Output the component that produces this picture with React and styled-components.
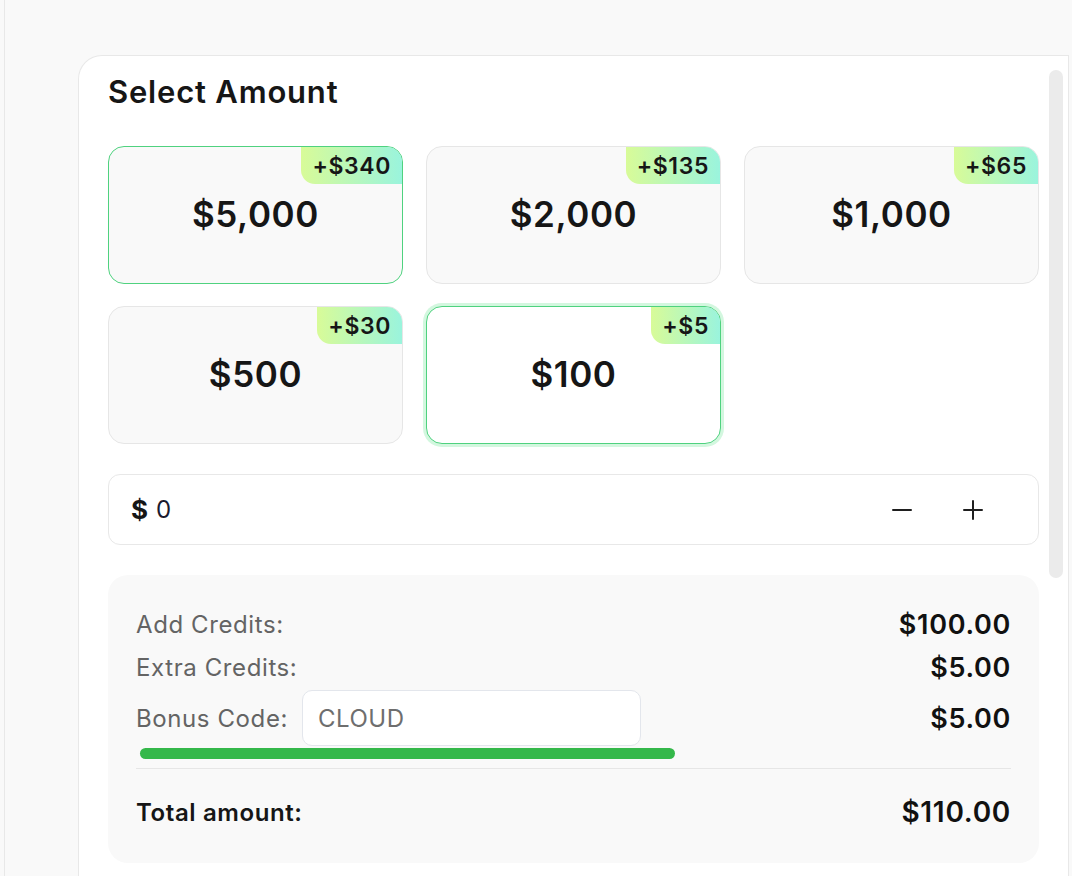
import React from 'react';
import styled, { createGlobalStyle, css } from 'styled-components';

const GlobalStyle = createGlobalStyle`
  html, body {
    margin: 0;
    padding: 0;
    background: #f9f9f9;
    font-family: Inter, "Noto Sans", sans-serif;
    color: #161616;
  }
  * { box-sizing: border-box; }
`;

const Page = styled.div`
  display: flex;
  height: 876px;
  overflow: hidden;
  background: #f9f9f9;
`;

const Rail = styled.div`
  width: 5px;
  flex-shrink: 0;
  border-right: 1px solid #e8e8e8;
`;

const Main = styled.div`
  flex: 1;
  padding: 55px 0 0 73px;
`;

const Card = styled.div`
  position: relative;
  width: 991px;
  height: 100%;
  background: #fff;
  border: 1px solid #e8e8e8;
  border-bottom: none;
  border-radius: 24px 0 0 0;
  padding: 16px 29px 0 29px;
`;

const ScrollThumb = styled.div`
  position: absolute;
  top: 14px;
  right: 5px;
  width: 14px;
  height: 508px;
  border-radius: 7px;
  background: #ebebeb;
`;

const Title = styled.h2`
  margin: 0 0 34px;
  font-size: 31px;
  line-height: 40px;
  font-weight: 600;
  letter-spacing: 0.8px;
  color: #161616;
`;

const Grid = styled.div`
  display: grid;
  grid-template-columns: repeat(3, 295px);
  column-gap: 23px;
  row-gap: 22px;
  width: 931px;
`;

const Tile = styled.div`
  position: relative;
  height: 138px;
  border-radius: 16px;
  border: 1px solid #e6e6e6;
  background: #f9f9f9;
  display: flex;
  align-items: center;
  justify-content: center;
  overflow: hidden;
  ${(p) =>
    p.$selected &&
    css`
      border-color: #4fd27f;
    `}
  ${(p) =>
    p.$active &&
    css`
      border-color: #4fd27f;
      background: #fff;
      box-shadow: 0 0 0 3px #d3f7df;
    `}
`;

const TileAmount = styled.span`
  font-size: 35px;
  font-weight: 600;
  letter-spacing: 0.6px;
  color: #161616;
  margin-top: -2px;
`;

const Badge = styled.span`
  position: absolute;
  top: 0;
  right: 0;
  height: 37px;
  padding: 0 11px 0 11px;
  display: flex;
  align-items: center;
  border-radius: 0 0 0 14px;
  background: linear-gradient(90deg, #d8fb98 0%, #9af4dd 100%);
  font-size: 23px;
  font-weight: 600;
  letter-spacing: 0.6px;
  color: #161616;
`;

const AmountInput = styled.div`
  margin-top: 30px;
  width: 931px;
  height: 71px;
  border: 1px solid #e8e8e8;
  border-radius: 12px;
  display: flex;
  align-items: center;
  padding: 0 47px 0 22px;
`;

const Dollar = styled.span`
  font-size: 26px;
  font-weight: 700;
  margin-right: 8px;
`;

const AmountValue = styled.span`
  flex: 1;
  font-size: 24px;
  font-weight: 400;
  color: #1a1a2e;
`;

const StepButton = styled.button`
  width: 36px;
  height: 36px;
  border: none;
  background: none;
  padding: 0;
  display: flex;
  align-items: center;
  justify-content: center;
  cursor: pointer;
  margin-left: ${(p) => p.$gap || 0}px;
`;

const Summary = styled.div`
  margin-top: 30px;
  width: 931px;
  border-radius: 20px;
  background: #f9f9f9;
  padding: 28px 28px 8px 28px;
`;

const Row = styled.div`
  display: flex;
  align-items: center;
  justify-content: space-between;
  height: ${(p) => p.$h || 43}px;
`;

const Label = styled.span`
  font-size: 24px;
  letter-spacing: 0.6px;
  color: #646464;
  display: flex;
  align-items: center;
`;

const Value = styled.span`
  font-size: ${(p) => p.$size || 27}px;
  font-weight: 600;
  letter-spacing: 0.7px;
  color: #111;
`;

const CodeField = styled.div`
  margin-left: 14px;
  width: 339px;
  height: 56px;
  background: #fff;
  border: 1px solid #e3e6ec;
  border-radius: 10px;
  display: flex;
  align-items: center;
  padding: 0 15px;
  font-size: 24px;
  letter-spacing: 0.5px;
  color: #6e6e6e;
`;

const ProgressBar = styled.div`
  margin: 1px 0 0 4px;
  width: 535px;
  height: 11px;
  border-radius: 6px;
  background: #34b84a;
`;

const Divider = styled.div`
  margin-top: 9px;
  height: 1px;
  background: #e6e6e6;
`;

const TotalLabel = styled.span`
  font-size: 24px;
  font-weight: 600;
  letter-spacing: 0.6px;
  color: #161616;
`;

const tiles = [
  { amount: '$5,000', bonus: '+$340', selected: true },
  { amount: '$2,000', bonus: '+$135' },
  { amount: '$1,000', bonus: '+$65' },
  { amount: '$500', bonus: '+$30' },
  { amount: '$100', bonus: '+$5', active: true },
];

const Minus = () => (
  <svg width="22" height="22" viewBox="0 0 22 22" fill="none" stroke="#1f1f1f" strokeWidth="2" strokeLinecap="round">
    <path d="M2 11h18" />
  </svg>
);

const Plus = () => (
  <svg width="22" height="22" viewBox="0 0 22 22" fill="none" stroke="#1f1f1f" strokeWidth="2" strokeLinecap="round">
    <path d="M2 11h18M11 2v18" />
  </svg>
);

export default function App() {
  return (
    <>
      <GlobalStyle />
      <Page>
        <Rail />
        <Main>
          <Card>
            <ScrollThumb />
            <Title>Select Amount</Title>
            <Grid>
              {tiles.map((t) => (
                <Tile key={t.amount} $selected={t.selected} $active={t.active}>
                  <Badge>{t.bonus}</Badge>
                  <TileAmount>{t.amount}</TileAmount>
                </Tile>
              ))}
            </Grid>
            <AmountInput>
              <Dollar>$</Dollar>
              <AmountValue>0</AmountValue>
              <StepButton aria-label="decrease">
                <Minus />
              </StepButton>
              <StepButton aria-label="increase" $gap={35}>
                <Plus />
              </StepButton>
            </AmountInput>
            <Summary>
              <Row>
                <Label>Add Credits:</Label>
                <Value>$100.00</Value>
              </Row>
              <Row>
                <Label>Extra Credits:</Label>
                <Value>$5.00</Value>
              </Row>
              <Row $h={58}>
                <Label>
                  Bonus Code:
                  <CodeField>CLOUD</CodeField>
                </Label>
                <Value>$5.00</Value>
              </Row>
              <ProgressBar />
              <Divider />
              <Row $h={86}>
                <TotalLabel>Total amount:</TotalLabel>
                <Value $size={28}>$110.00</Value>
              </Row>
            </Summary>
          </Card>
        </Main>
      </Page>
    </>
  );
}
